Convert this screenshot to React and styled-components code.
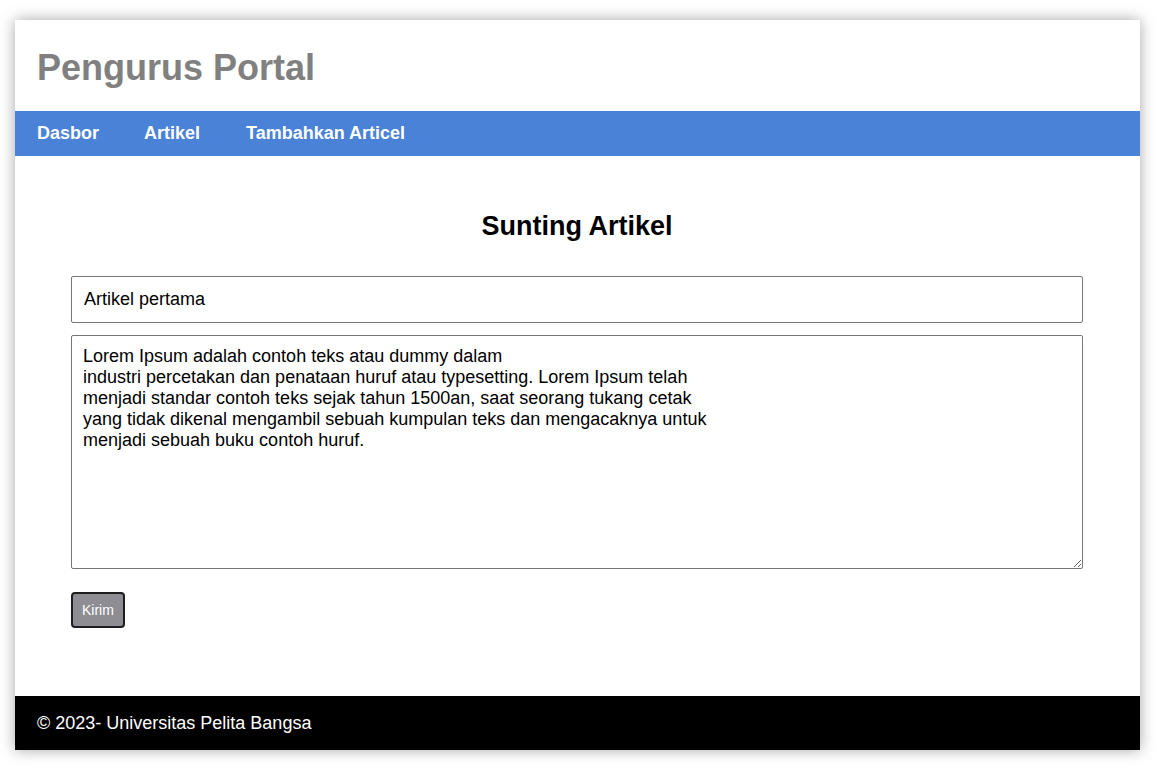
import React from "react";
import styled, { createGlobalStyle } from "styled-components";

const GlobalStyle = createGlobalStyle`
  body {
    margin: 0;
    background: #fff;
    font-family: "Liberation Sans", Arial, sans-serif;
  }
`;

const Wrapper = styled.div`
  width: 1125px;
  margin: 20px 0 24px 15px;
  background: #fff;
  box-shadow: 0 0 14px rgba(0, 0, 0, 0.35);
`;

const Header = styled.header`
  padding: 27px 22px 22px;
  h1 {
    margin: 0;
    font-size: 36px;
    font-weight: bold;
    color: #808080;
    line-height: normal;
  }
`;

const Nav = styled.nav`
  display: flex;
  background: #4a82d8;
  padding: 12px 0;
  a {
    color: #fff;
    font-weight: bold;
    font-size: 18px;
    text-decoration: none;
    padding: 0 22px;
    line-height: normal;
  }
  a + a {
    padding-left: 23px;
  }
  a:last-child {
    padding-left: 24px;
  }
`;

const Main = styled.main`
  padding: 55px 57px 68px 56px;
  h2 {
    margin: 0 0 34px;
    text-align: center;
    font-size: 27px;
    line-height: 31px;
  }
`;

const Form = styled.form`
  display: flex;
  flex-direction: column;
  align-items: flex-start;
`;

const Input = styled.input`
  box-sizing: border-box;
  width: 100%;
  height: 47px;
  padding: 0 12px;
  border: 1px solid #767676;
  border-radius: 2px;
  font-family: "Liberation Sans", Arial, sans-serif;
  font-size: 18px;
  color: #000;
  margin: 0 0 12px;
`;

const TextArea = styled.textarea`
  box-sizing: border-box;
  width: 100%;
  height: 234px;
  padding: 10px 11px;
  border: 1px solid #767676;
  border-radius: 2px;
  font-family: "Liberation Sans", Arial, sans-serif;
  font-size: 18px;
  line-height: 21px;
  color: #000;
  margin: 0 0 23px;
`;

const Button = styled.button`
  background: #8d8d93;
  color: #fff;
  border: 2px solid #1e1e1e;
  border-radius: 4px;
  padding: 8px 9px;
  font-family: "Liberation Sans", Arial, sans-serif;
  font-size: 14px;
  line-height: 16px;
  cursor: pointer;
`;

const Footer = styled.footer`
  background: #000;
  color: #fff;
  padding: 17px 22px;
  font-size: 18px;
  line-height: 20px;
`;

const body = `Lorem Ipsum adalah contoh teks atau dummy dalam
industri percetakan dan penataan huruf atau typesetting. Lorem Ipsum telah
menjadi standar contoh teks sejak tahun 1500an, saat seorang tukang cetak
yang tidak dikenal mengambil sebuah kumpulan teks dan mengacaknya untuk
menjadi sebuah buku contoh huruf.`;

const App = () => {
  return (
    <>
      <GlobalStyle />
      <Wrapper>
        <Header>
          <h1>Pengurus Portal</h1>
        </Header>
        <Nav>
          <a href="#">Dasbor</a>
          <a href="#">Artikel</a>
          <a href="#">Tambahkan Articel</a>
        </Nav>
        <Main>
          <h2>Sunting Artikel</h2>
          <Form onSubmit={(e) => e.preventDefault()}>
            <Input type="text" defaultValue="Artikel pertama" />
            <TextArea defaultValue={body} />
            <Button type="submit">Kirim</Button>
          </Form>
        </Main>
        <Footer>© 2023- Universitas Pelita Bangsa</Footer>
      </Wrapper>
    </>
  );
};

export default App;
